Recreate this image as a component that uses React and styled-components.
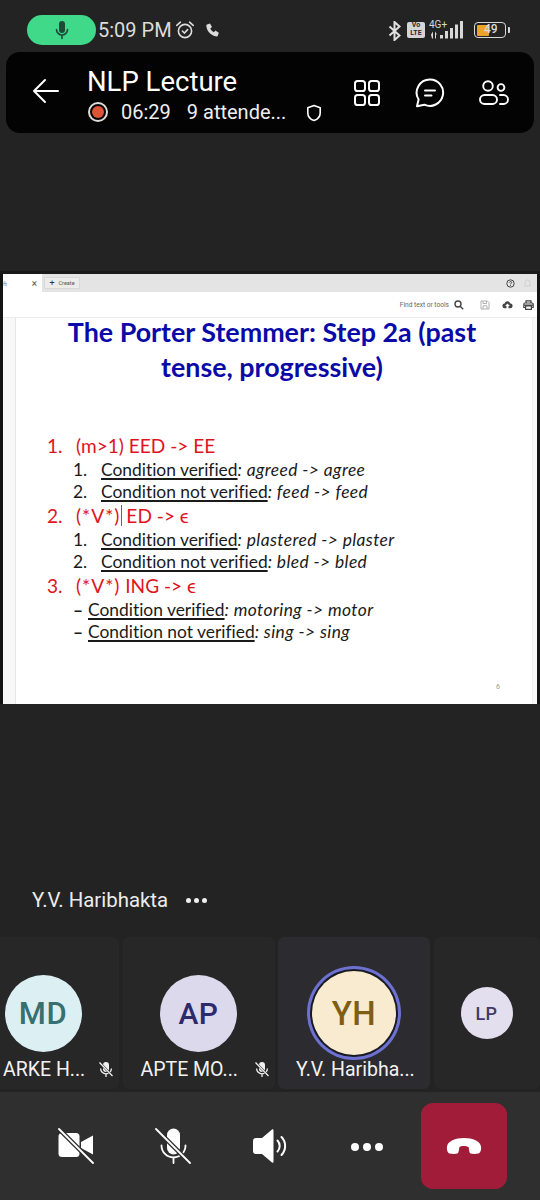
import React from "react";
import styled, { createGlobalStyle } from "styled-components";

const GlobalStyle = createGlobalStyle`
  html, body {
    margin: 0;
    padding: 0;
    background: #232323;
  }
  * {
    box-sizing: border-box;
  }
`;

const Page = styled.div`
  width: 540px;
  height: 1200px;
  overflow: hidden;
  display: flex;
  flex-direction: column;
  background: #232323;
  font-family: Roboto, "Liberation Sans", sans-serif;
  color: #fff;
`;

/* status bar */
const StatusBar = styled.div`
  height: 52px;
  padding: 15px 30px 0 27px;
  display: flex;
  align-items: flex-start;
`;
const MicPill = styled.div`
  width: 69px;
  height: 30px;
  border-radius: 15px;
  background: #40d98a;
  display: flex;
  align-items: center;
  justify-content: center;
`;
const Clock = styled.span`
  margin-left: 2px;
  font-size: 20px;
  line-height: 30px;
  color: #dcdcdc;
`;
const StatusIcon = styled.svg`
  margin-left: ${(props) => props.gap || 0}px;
  margin-top: ${(props) => props.top || 0}px;
  flex: none;
`;
const Spacer = styled.div`
  flex: 1;
`;
const VoLte = styled.div`
  width: 18px;
  height: 16px;
  margin: 7px 0 0 5px;
  border-radius: 2px;
  background: #d5d5d5;
  color: #2a2a2a;
  font-size: 7px;
  font-weight: 700;
  line-height: 7.5px;
  text-align: center;
`;
const Network = styled.div`
  width: 37px;
  margin: 6px 0 0 4px;
  position: relative;
  height: 18px;
`;
const NetworkLabel = styled.span`
  position: absolute;
  left: 0;
  top: -1px;
  font-size: 10px;
  line-height: 10px;
  color: #d8d8d8;
`;
const Battery = styled.div`
  width: 32px;
  height: 16px;
  margin: 7px 0 0 8px;
  border: 1.5px solid #d8d8d8;
  border-radius: 4px;
  padding: 1.5px;
  display: flex;
  position: relative;
`;
const BatteryFill = styled.div`
  width: 12px;
  background: #eda32a;
  border-radius: 1px;
`;
const BatteryText = styled.span`
  position: absolute;
  left: 9px;
  top: 0;
  font-size: 12px;
  line-height: 13px;
  font-weight: 500;
  color: #d8d8d8;
`;
const BatteryCap = styled.div`
  width: 2px;
  height: 6px;
  margin: 12px 0 0 2px;
  background: #d8d8d8;
  border-radius: 0 1px 1px 0;
`;

/* meeting header */
const Header = styled.header`
  height: 81px;
  margin: 0 6px;
  border-radius: 14px;
  background: #030303;
  display: flex;
  align-items: flex-start;
  flex: none;
`;
const BackButton = styled.div`
  width: 81px;
  padding: 26px 0 0 26px;
  flex: none;
`;
const HeaderText = styled.div`
  width: 261px;
  flex: none;
  padding-top: 13px;
`;
const Title = styled.div`
  font-size: 27.5px;
  line-height: 33px;
`;
const SubRow = styled.div`
  display: flex;
  align-items: center;
  height: 24px;
  margin-top: 2px;
  font-size: 20px;
  color: #eeeeee;
`;
const RecIcon = styled.div`
  width: 20px;
  height: 20px;
  margin-left: 1px;
  border-radius: 50%;
  border: 2px solid #e0dcd8;
  padding: 2px;
  background-clip: content-box;
  background-color: #dd5336;
`;
const Timer = styled.span`
  margin-left: 13px;
`;
const Attendees = styled.span`
  margin-left: 16px;
`;
const ShieldWrap = styled.svg`
  margin-left: 20px;
  margin-top: 2px;
`;
const HeaderActions = styled.div`
  display: flex;
  align-items: center;
  gap: 34px;
  padding: 26px 0 0 5px;
`;

/* shared slide */
const Stage = styled.main`
  flex: 1;
  min-height: 0;
  padding-top: 141px;
`;
const Slide = styled.section`
  height: 430px;
  background: #fff;
  border-left: 3px solid #141414;
  border-right: 3px solid #141414;
  box-shadow: 0 -3px 0 #1a1a1a;
  display: flex;
  flex-direction: column;
  color: #111;
`;
const TabBar = styled.div`
  height: 18px;
  background: #e4e4e4;
  display: flex;
  align-items: center;
  flex: none;
`;
const ActiveTab = styled.div`
  width: 39px;
  height: 18px;
  background: #fff;
  font-size: 10px;
  color: #555;
  display: flex;
  align-items: center;
  justify-content: space-between;
  padding-right: 5px;
`;
const TabName = styled.span`
  font-size: 6px;
  color: #777;
`;
const CreateButton = styled.div`
  width: 36px;
  height: 12px;
  margin-left: 2px;
  background: #ececec;
  border: 1px solid #d8d8d8;
  border-radius: 1px;
  font-size: 5.5px;
  color: #555;
  display: flex;
  align-items: center;
  justify-content: center;
  gap: 4px;
`;
const PlusSign = styled.span`
  font-size: 9px;
  line-height: 9px;
  color: #333;
`;
const BarEnd = styled.div`
  width: 5px;
  flex: none;
`;
const ToolBar = styled.div`
  height: 26px;
  border-bottom: 1px solid #ececec;
  display: flex;
  align-items: center;
  justify-content: flex-end;
  padding-right: 3px;
  flex: none;
`;
const FindText = styled.span`
  font-size: 6.6px;
  color: #666;
  margin-right: 5px;
`;
const ToolIcon = styled.svg`
  margin-left: ${(props) => props.gap || 0}px;
  flex: none;
`;
const SlideBody = styled.div`
  flex: 1;
  min-height: 0;
  display: flex;
  position: relative;
`;
const Rail = styled.div`
  width: 13px;
  background: #f8f8f8;
  border-right: 1px solid #e6e6e6;
  flex: none;
`;
const ScrollEdge = styled.div`
  width: 5px;
  background: #f9f9f9;
  border-left: 1px solid #eeeeee;
  flex: none;
`;
const Sheet = styled.div`
  flex: 1;
  font-family: Lato, "Open Sans", sans-serif;
  font-variant-ligatures: none;
`;
const SlideTitle = styled.h1`
  margin: -3px 0 0;
  width: 512px;
  text-align: center;
  font-size: 26.85px;
  line-height: 34.5px;
  font-weight: 700;
  color: #0a0aa8;
`;
const Outline = styled.div`
  margin-top: 49px;
  display: flex;
  flex-direction: column;
`;
const Item = styled.div`
  display: flex;
  align-items: center;
  height: ${(props) => props.rowHeight || 23}px;
  padding-left: ${(props) => props.indent}px;
  font-size: ${(props) => (props.red ? 19.1 : 17.4)}px;
  color: ${(props) => (props.red ? "#e0141e" : "#1a1a1a")};
  white-space: pre;
`;
const Marker = styled.span`
  width: ${(props) => props.width}px;
  font-weight: ${(props) => (props.dash ? 700 : 400)};
  flex: none;
`;
const Verified = styled.span`
  text-decoration: underline;
  text-decoration-thickness: 1.5px;
  text-underline-offset: 2px;
`;
const Example = styled.span`
  font-style: italic;
  letter-spacing: 0.4px;
`;
const Pattern = styled.span`
  letter-spacing: 1px;
`;
const Caret = styled.span`
  display: inline-block;
  width: 1px;
  height: 21px;
  margin: 0 4px 0 1px;
  background: #666;
  vertical-align: middle;
`;
const PageNumber = styled.span`
  position: absolute;
  right: 37px;
  bottom: 13px;
  font-size: 7px;
  color: #999;
`;

/* participants */
const SpeakerRow = styled.div`
  margin-top: 183px;
  height: 26px;
  padding-left: 32px;
  display: flex;
  align-items: center;
  font-size: 20.4px;
  color: #ececec;
`;
const MoreDots = styled.div`
  margin-left: 18px;
  display: flex;
  gap: 3px;
`;
const SmallDot = styled.i`
  width: 5px;
  height: 5px;
  border-radius: 50%;
  background: #f0f0f0;
`;
const TileStrip = styled.div`
  margin: 24px 0 0 -33px;
  height: 152px;
  display: flex;
  gap: 3.5px;
`;
const Tile = styled.div`
  width: ${(props) => props.width || 152}px;
  height: 152px;
  flex: none;
  border-radius: 6px;
  background: ${(props) => (props.active ? "#2b2b30" : "#272727")};
  display: flex;
  flex-direction: column;
  align-items: center;
`;
const AvatarSlot = styled.div`
  height: 120px;
  width: 100%;
  display: flex;
  align-items: center;
  justify-content: center;
  padding-top: 32px;
  flex: none;
`;
const Avatar = styled.div`
  width: ${(props) => props.size}px;
  height: ${(props) => props.size}px;
  border-radius: 50%;
  background: ${(props) => props.bg};
  color: ${(props) => props.fg};
  font-size: ${(props) => props.fontSize}px;
  font-weight: 500;
  letter-spacing: 0.5px;
  display: flex;
  align-items: center;
  justify-content: center;
  flex: none;
  ${(props) => props.ring && "box-shadow: 0 0 0 2px #1a1a22, 0 0 0 5px #6d72d2;"}
`;
const NameRow = styled.div`
  width: 100%;
  height: 24px;
  padding: 0 5px 0 ${(props) => props.left || 18}px;
  display: flex;
  align-items: center;
  justify-content: space-between;
  font-size: 19.5px;
  color: #f2f2f2;
  white-space: nowrap;
`;

/* call controls */
const ControlBar = styled.footer`
  margin-top: 3px;
  height: 108px;
  background: #2f2f2f;
  padding: 11px 0 0 27px;
  display: flex;
  align-items: flex-start;
  flex: none;
`;
const ControlSlot = styled.div`
  width: 97px;
  height: 86px;
  display: flex;
  align-items: center;
  justify-content: center;
  flex: none;
`;
const ControlDots = styled.div`
  display: flex;
  gap: 4px;
  margin-top: 2px;
`;
const ControlDot = styled.i`
  width: 8px;
  height: 8px;
  border-radius: 50%;
  background: #fff;
`;
const EndButton = styled.div`
  width: 86px;
  height: 86px;
  margin-left: 6px;
  border-radius: 12px;
  background: #a11c38;
  display: flex;
  align-items: center;
  justify-content: center;
  flex: none;
`;

const MicGlyph = () => (
  <svg width="18" height="20" viewBox="0 0 18 20" fill="none">
    <rect x="6" y="1" width="6" height="12" rx="3" fill="#1d4a36" />
    <path d="M3.5 9.5a5.5 5.5 0 0 0 11 0M9 15v3.5" stroke="#1d4a36" strokeWidth="1.6" strokeLinecap="round" />
  </svg>
);

const TileMute = () => (
  <svg width="16" height="17" viewBox="0 0 16 17" fill="none">
    <rect x="5" y="1" width="6" height="10" rx="3" fill="#f0f0f0" />
    <path d="M2.6 7.5a5.4 5.4 0 0 0 10.8 0M8 13v3" stroke="#f0f0f0" strokeWidth="1.3" />
    <path d="M1.5 1.5l13 13.5" stroke="#272727" strokeWidth="2.4" />
    <path d="M1.5 1.5l13 13.5" stroke="#f0f0f0" strokeWidth="1.3" />
  </svg>
);

const tiles = [
  { label: "ARKE H...", left: 36, initials: "MD", size: 77, fontSize: 31, bg: "#dcf0f3", fg: "#38706f", mute: true },
  { label: "APTE MO...", initials: "AP", size: 77, fontSize: 30, bg: "#dcd9ec", fg: "#2c2a6c", mute: true },
  { label: "Y.V. Haribha...", initials: "YH", size: 84, fontSize: 33, bg: "#f8ebd0", fg: "#7f5d14", ring: true, active: true },
  { label: "", initials: "LP", size: 52, fontSize: 18, bg: "#e3dfef", fg: "#3e3a63", width: 106 },
];

const steps = [
  {
    marker: "1.",
    rule: "(m>1) EED -> EE",
    rows: [
      ["1.", "Condition verified", ": agreed -> agree"],
      ["2.", "Condition not verified", ": feed -> feed"],
    ],
  },
  {
    marker: "2.",
    rule: (
      <>
        <Pattern>(*V*)</Pattern>
        <Caret />
        ED -&gt; ϵ
      </>
    ),
    rows: [
      ["1.", "Condition verified", ": plastered -> plaster"],
      ["2.", "Condition not verified", ": bled -> bled"],
    ],
  },
  {
    marker: "3.",
    rule: (
      <>
        <Pattern>(*V*)</Pattern> ING -&gt; ϵ
      </>
    ),
    dash: true,
    rows: [
      ["–", "Condition verified", ": motoring -> motor"],
      ["–", "Condition not verified", ": sing -> sing"],
    ],
  },
];

const App = () => (
  <Page>
    <GlobalStyle />
    <StatusBar>
      <MicPill>
        <MicGlyph />
      </MicPill>
      <Clock>5:09 PM</Clock>
      <StatusIcon gap={3} top={5} width="20" height="20" viewBox="0 0 20 20" fill="none" stroke="#dcdcdc" strokeWidth="1.6">
        <circle cx="10" cy="11" r="6.6" />
        <path d="M7.4 11l2 2 3.2-3.4M1.8 5.4l3.6-3.2M18.2 5.4l-3.6-3.2" strokeLinecap="round" />
      </StatusIcon>
      <StatusIcon gap={10} top={7} width="15" height="16" viewBox="0 0 15 16" fill="#dcdcdc">
        <path d="M2 2.5l3-1 2 3.6-1.7 1.4c.7 1.6 2 3 3.6 3.7l1.5-1.6 3.4 2.1-1 3c-.2.5-.7.8-1.2.7C5.9 13.8 1.6 9.2 1.3 3.6c0-.5.2-.9.7-1.1z" />
      </StatusIcon>
      <Spacer />
      <StatusIcon top={6} width="14" height="20" viewBox="0 0 14 20" fill="none" stroke="#e0e0e0" strokeWidth="2">
        <path d="M1.5 5.5l10 9-5 4.5v-18l5 4.5-10 9" />
      </StatusIcon>
      <VoLte>
        Vo
        <br />
        LTE
      </VoLte>
      <Network>
        <NetworkLabel>4G+</NetworkLabel>
        <svg width="37" height="18" viewBox="0 0 37 18" fill="#d8d8d8">
          <path d="M2 13.5l2-3v7h-1zM6 10.5l2 3h-1v4h-1z" />
          <rect x="11" y="14" width="3" height="3.5" />
          <rect x="16" y="10" width="3" height="7.5" />
          <rect x="21" y="7" width="3" height="10.5" />
          <rect x="26" y="3.5" width="3" height="14" />
          <rect x="31" y="0" width="3" height="17.5" />
        </svg>
      </Network>
      <Battery>
        <BatteryFill />
        <BatteryText>49</BatteryText>
      </Battery>
      <BatteryCap />
    </StatusBar>

    <Header>
      <BackButton>
        <svg width="28" height="26" viewBox="0 0 28 26" fill="none" stroke="#fff" strokeWidth="2" strokeLinecap="round" strokeLinejoin="round">
          <path d="M26 13H2M13 2L2 13l11 11" />
        </svg>
      </BackButton>
      <HeaderText>
        <Title>NLP Lecture</Title>
        <SubRow>
          <RecIcon />
          <Timer>06:29</Timer>
          <Attendees>9 attende...</Attendees>
          <ShieldWrap width="16" height="18" viewBox="0 0 16 18" fill="none" stroke="#fff" strokeWidth="1.6" strokeLinejoin="round">
            <path d="M8 1.5l6.2 2.2v5.2c0 3.6-2.6 6.3-6.2 7.6-3.6-1.3-6.2-4-6.2-7.6V3.7z" />
          </ShieldWrap>
        </SubRow>
      </HeaderText>
      <HeaderActions>
        <svg width="28" height="28" viewBox="0 0 28 28" fill="none" stroke="#fff" strokeWidth="2">
          <rect x="2" y="2" width="10" height="10" rx="2.6" />
          <rect x="16" y="2" width="10" height="10" rx="2.6" />
          <rect x="2" y="16" width="10" height="10" rx="2.6" />
          <rect x="16" y="16" width="10" height="10" rx="2.6" />
        </svg>
        <svg width="30" height="30" viewBox="0 0 30 30" fill="none" stroke="#fff" strokeWidth="2" strokeLinecap="round" strokeLinejoin="round">
          <path d="M15 1.5a13.2 13.2 0 1 1-5.6 25.2L2 28.2l1.6-6.6A13.2 13.2 0 0 1 15 1.5z" />
          <path d="M10 12.5h10M10 17.5h6.5" />
        </svg>
        <svg width="30" height="26" viewBox="0 0 30 26" fill="none" stroke="#fff" strokeWidth="1.9">
          <circle cx="9" cy="6" r="4.8" />
          <circle cx="22" cy="7.5" r="3.4" />
          <rect x="1" y="15" width="17" height="9" rx="4.5" />
          <path d="M21 15h3.5a4.5 4.5 0 0 1 0 9H21" strokeLinecap="round" />
        </svg>
      </HeaderActions>
    </Header>

    <Stage>
      <Slide>
        <TabBar>
          <ActiveTab>
            <TabName>ft</TabName>×
          </ActiveTab>
          <CreateButton>
            <PlusSign>+</PlusSign>
            Create
          </CreateButton>
          <Spacer />
          <ToolIcon width="9" height="9" viewBox="0 0 9 9" fill="none" stroke="#444" strokeWidth="1">
            <circle cx="4.5" cy="4.5" r="3.7" />
            <path d="M3.4 3.5c.2-1.2 2.3-1.2 2.3 0 0 .9-1.2.8-1.2 1.8M4.5 6v.8" />
          </ToolIcon>
          <ToolIcon gap={8} width="9" height="9" viewBox="0 0 9 9" fill="none" stroke="#d0d0d0" strokeWidth="1">
            <path d="M1.5 7h6L7 6V3.5a2.5 2.5 0 0 0-5 0V6z" />
          </ToolIcon>
          <BarEnd />
        </TabBar>
        <ToolBar>
          <FindText>Find text or tools</FindText>
          <ToolIcon width="10" height="10" viewBox="0 0 10 10" fill="none" stroke="#444" strokeWidth="1.4">
            <circle cx="4" cy="4" r="3" />
            <path d="M6.2 6.2L9.2 9.2" />
          </ToolIcon>
          <ToolIcon gap={16} width="10" height="10" viewBox="0 0 10 10" fill="none" stroke="#aaa" strokeWidth="0.9">
            <path d="M1 1h6.5L9 2.5V9H1zM3 1v2.5h3.5V1M3 9V5.8h4V9" />
          </ToolIcon>
          <ToolIcon gap={12} width="11" height="10" viewBox="0 0 11 10" fill="#444">
            <path d="M2.8 8.2a2.3 2.3 0 0 1-.2-4.6 3 3 0 0 1 5.8 0 2.3 2.3 0 0 1-.2 4.6H6.5V6h1.4L5.5 3.5 3.1 6h1.4v2.2z" />
          </ToolIcon>
          <ToolIcon gap={10} width="11" height="10" viewBox="0 0 11 10" fill="none" stroke="#444" strokeWidth="1.2">
            <path d="M3 3V.8h5V3M2.6 7.5H.8V4.2A1.2 1.2 0 0 1 2 3h7a1.2 1.2 0 0 1 1.2 1.2v3.3H8.400M2.6 6h5.800v3.300H2.6zM.8 5.200h9.400" />
          </ToolIcon>
        </ToolBar>
        <SlideBody>
          <Rail />
          <Sheet>
            <SlideTitle>
              The Porter Stemmer: Step 2a (past
              <br />
              tense, progressive)
            </SlideTitle>
            <Outline>
              {steps.map((step) => (
                <React.Fragment key={step.marker}>
                  <Item red indent={31} rowHeight={25}>
                    <Marker width={29}>{step.marker}</Marker>
                    {step.rule}
                  </Item>
                  {step.rows.map(([marker, verified, example]) => (
                    <Item key={verified} indent={57} rowHeight={22.5}>
                      <Marker width={step.dash ? 15 : 28} dash={step.dash}>
                        {marker}
                      </Marker>
                      <Verified>{verified}</Verified>
                      <Example>{example}</Example>
                    </Item>
                  ))}
                </React.Fragment>
              ))}
            </Outline>
          </Sheet>
          <ScrollEdge />
          <PageNumber>6</PageNumber>
        </SlideBody>
      </Slide>

      <SpeakerRow>
        Y.V. Haribhakta
        <MoreDots>
          <SmallDot />
          <SmallDot />
          <SmallDot />
        </MoreDots>
      </SpeakerRow>

      <TileStrip>
        {tiles.map((tile) => (
          <Tile key={tile.initials} width={tile.width} active={tile.active}>
            <AvatarSlot>
              <Avatar size={tile.size} fontSize={tile.fontSize} bg={tile.bg} fg={tile.fg} ring={tile.ring}>
                {tile.initials}
              </Avatar>
            </AvatarSlot>
            <NameRow left={tile.left}>
              <span>{tile.label}</span>
              {tile.mute && <TileMute />}
            </NameRow>
          </Tile>
        ))}
      </TileStrip>

      <ControlBar>
        <ControlSlot>
          <svg width="36" height="36" viewBox="0 0 36 36">
            <rect x="0.5" y="5" width="21" height="24" rx="3.5" fill="#fff" />
            <path d="M23 14l12-6.5v19L23 20z" fill="#fff" />
            <path d="M1 1l34 34" stroke="#2f2f2f" strokeWidth="4.5" />
            <path d="M1 1l34 34" stroke="#fff" strokeWidth="1.8" strokeLinecap="round" />
          </svg>
        </ControlSlot>
        <ControlSlot>
          <svg width="36" height="36" viewBox="0 0 36 36" fill="none">
            <rect x="12" y="0.5" width="13" height="26" rx="6.5" fill="#fff" />
            <path d="M6.5 17.5a12 12 0 0 0 24 0M18.5 29.5v5.5" stroke="#fff" strokeWidth="1.8" strokeLinecap="round" />
            <path d="M1 1l34 34" stroke="#2f2f2f" strokeWidth="4.5" />
            <path d="M1 1l34 34" stroke="#fff" strokeWidth="1.8" strokeLinecap="round" />
          </svg>
        </ControlSlot>
        <ControlSlot>
          <svg width="36" height="36" viewBox="0 0 36 36" fill="none">
            <path d="M1 13a3 3 0 0 1 3-3h6L20 1.5c.6-.5 1.5 0 1.5.8v31.4c0 .8-.9 1.3-1.5.8L10 26H4a3 3 0 0 1-3-3z" fill="#fff" />
            <path d="M25.5 12.5a8 8 0 0 1 0 11M29.5 9a13 13 0 0 1 0 18" stroke="#fff" strokeWidth="2" strokeLinecap="round" />
          </svg>
        </ControlSlot>
        <ControlSlot>
          <ControlDots>
            <ControlDot />
            <ControlDot />
            <ControlDot />
          </ControlDots>
        </ControlSlot>
        <EndButton>
          <svg width="36" height="18" viewBox="0 0 36 18" fill="#fff">
            <path d="M18 1C9 1 2 4 1 9.5c-.5 3 .5 6.5 2.5 7 3 .5 6 .5 8 0 1.5-.5 1.5-5.5 2-6.5 1-1.5 7-1.5 9 0 .5 1 .5 6 2 6.5 2 .5 5 .5 8 0 2-.5 3-4 2.5-7C34 4 27 1 18 1z" />
          </svg>
        </EndButton>
      </ControlBar>
    </Stage>
  </Page>
);

export default App;
